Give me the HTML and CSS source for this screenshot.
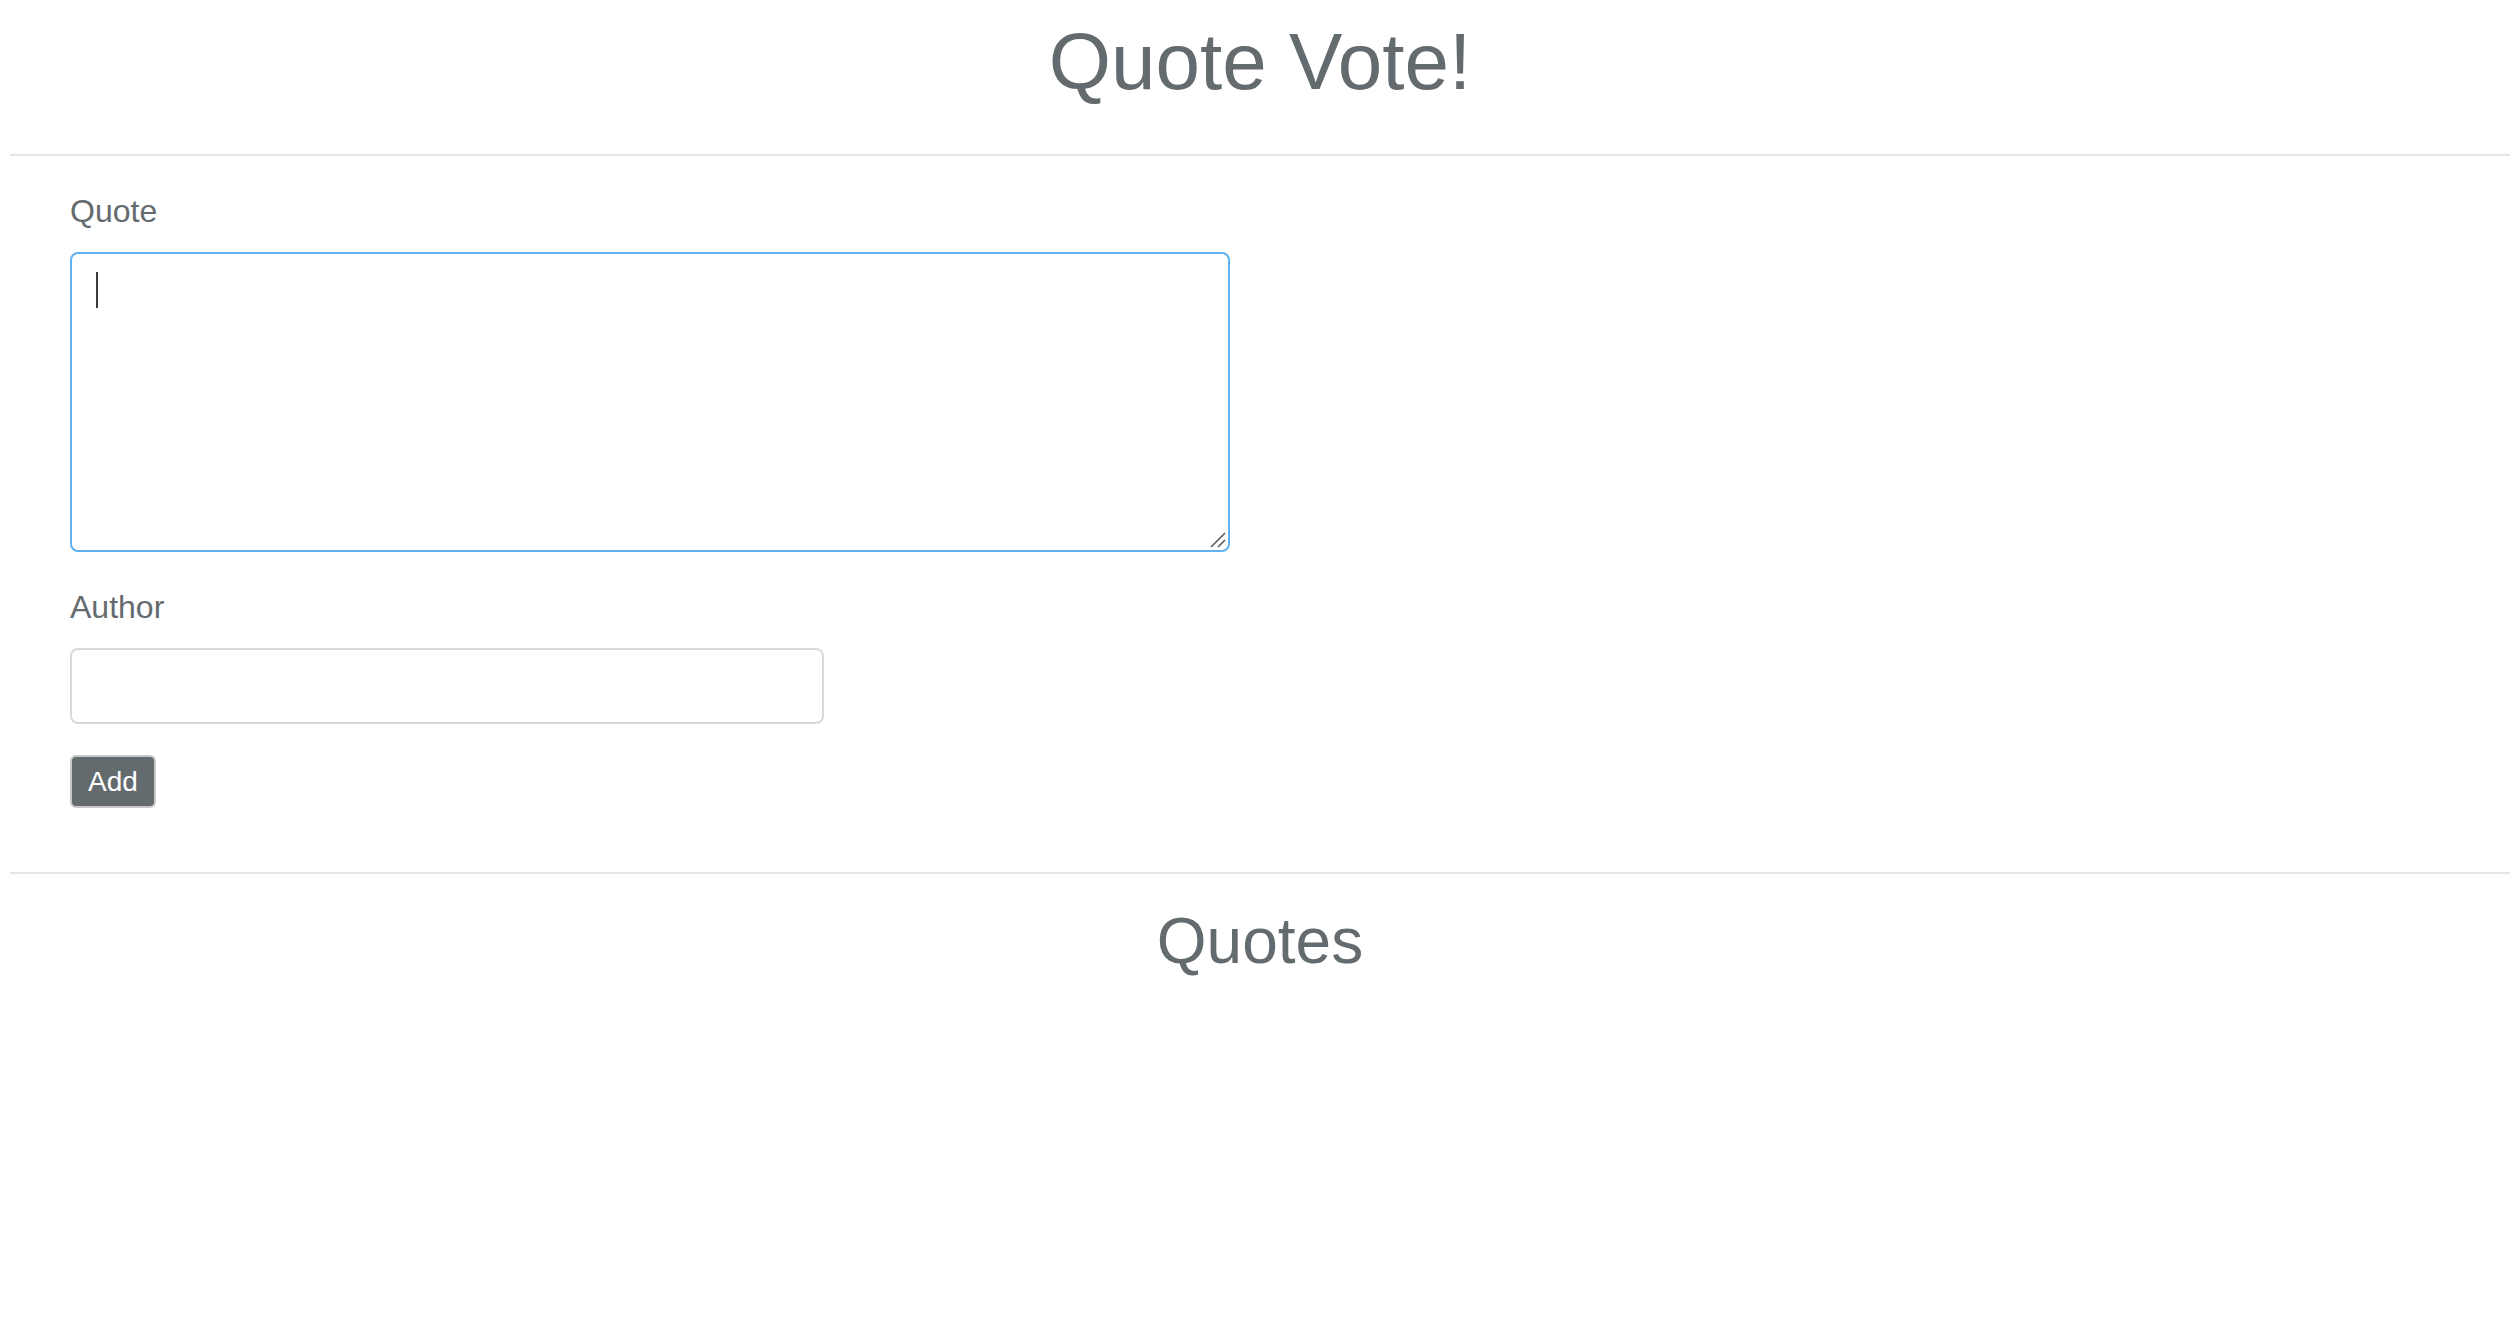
FILE: index.html
```html
<!DOCTYPE html>
<html lang="en">
<head>
<meta charset="utf-8">
<title>Quote Vote!</title>
<link rel="stylesheet" href="styles.css">
</head>
<body>
<div class="page">
  <h1 class="title">Quote Vote!</h1>
  <hr class="rule rule-top">
  <form class="quote-form">
    <div class="form-group">
      <label class="form-label" for="quote">Quote</label>
      <div class="textarea-wrap">
        <textarea id="quote" class="form-control form-textarea"></textarea>
        <span class="caret"></span>
        <svg class="grip" width="18" height="18" viewBox="0 0 18 18" aria-hidden="true">
          <line x1="2" y1="16" x2="16" y2="2" stroke="#5a5a5a" stroke-width="1.6"/>
          <line x1="9" y1="16" x2="16" y2="9" stroke="#5a5a5a" stroke-width="1.6"/>
        </svg>
      </div>
    </div>
    <div class="form-group">
      <label class="form-label" for="author">Author</label>
      <input id="author" class="form-control form-input" type="text">
    </div>
    <button type="button" class="btn-add">Add</button>
  </form>
  <hr class="rule rule-bottom">
  <h2 class="subtitle">Quotes</h2>
</div>
</body>
</html>
```

FILE: styles.css
```css
html, body {
  margin: 0;
  padding: 0;
  background: #ffffff;
}

body {
  font-family: "Liberation Sans", Arial, Helvetica, sans-serif;
  color: #646b6f;
}

.page {
  padding: 0 10px;
}

.title {
  margin: 14px 0 0;
  font-size: 80px;
  font-weight: 400;
  line-height: 96px;
  text-align: center;
}

.rule {
  border: 0;
  border-top: 2px solid #e5e5e5;
  height: 0;
  margin: 0;
}

.rule-top {
  margin-top: 44px;
}

.quote-form {
  padding: 31px 0 0 60px;
}

.form-group {
  margin-bottom: 31px;
}

.form-label {
  display: block;
  font-size: 32px;
  line-height: 48px;
  margin-bottom: 17px;
}

.textarea-wrap {
  position: relative;
  width: 1160px;
  height: 300px;
}

.form-control {
  display: block;
  box-sizing: border-box;
  font-family: "Liberation Sans", Arial, Helvetica, sans-serif;
  font-size: 32px;
  line-height: 48px;
  color: #495057;
  background: #ffffff;
  border: 2px solid #d9d9d9;
  border-radius: 8px;
  padding: 12px 24px;
  margin: 0;
  outline: none;
}

.form-textarea {
  width: 1160px;
  height: 300px;
  border-color: #5db3f4;
  caret-color: transparent;
  resize: none;
}

.caret {
  position: absolute;
  left: 26px;
  top: 20px;
  width: 2px;
  height: 36px;
  background: #3a3a3a;
}

.grip {
  position: absolute;
  right: 3px;
  bottom: 3px;
}

.form-input {
  width: 754px;
  height: 76px;
}

.btn-add {
  display: block;
  margin-top: 2px;
  box-sizing: border-box;
  height: 53px;
  padding: 8px 16px;
  font-family: "Liberation Sans", Arial, Helvetica, sans-serif;
  font-size: 28px;
  line-height: 33px;
  color: #ffffff;
  background: #646b6f;
  border: 2px solid #c9c9c9;
  border-radius: 6px;
  cursor: pointer;
}

.rule-bottom {
  margin-top: 64px;
}

.subtitle {
  margin: 29px 0 0;
  font-size: 64px;
  font-weight: 400;
  line-height: 77px;
  text-align: center;
}
```
